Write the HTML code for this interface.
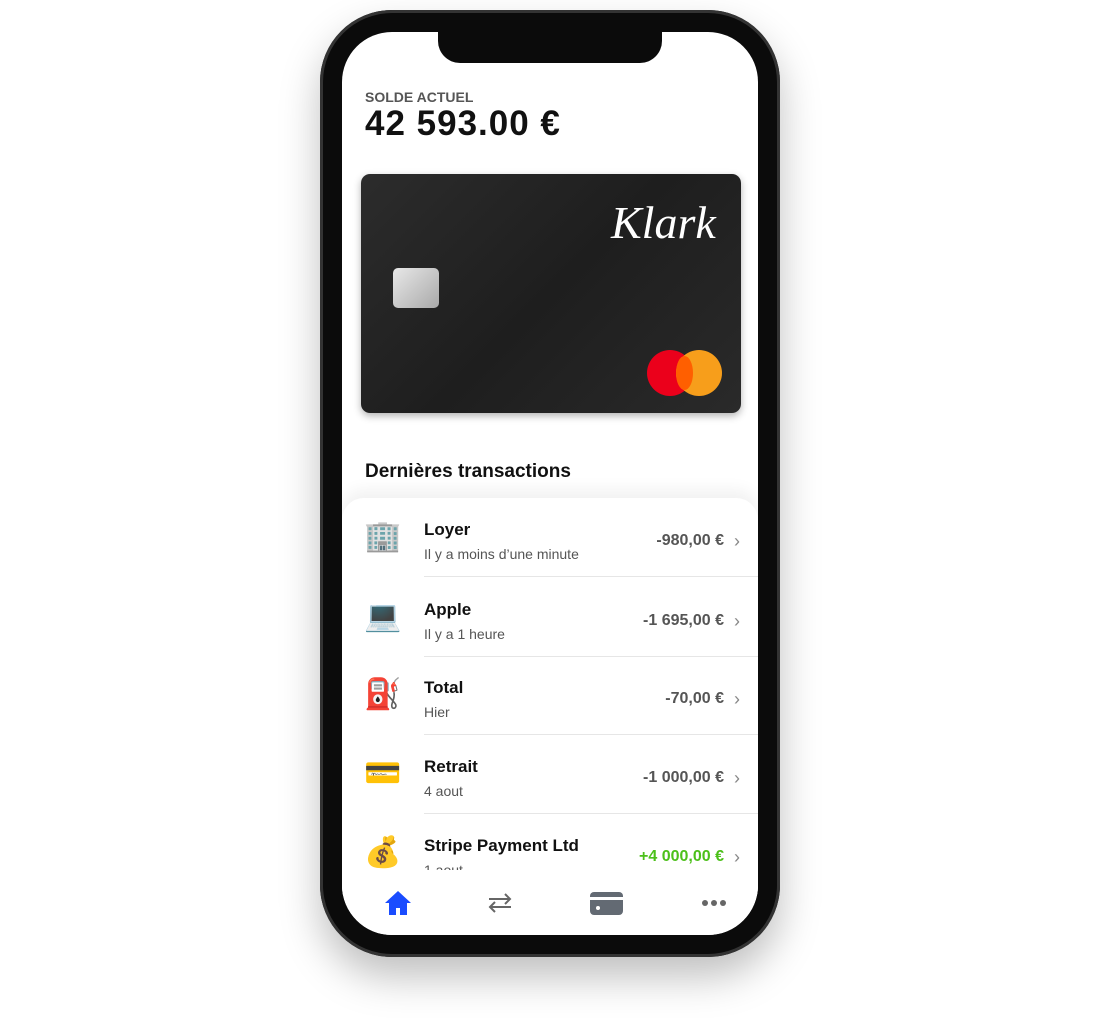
<!DOCTYPE html>
<html><head><meta charset="utf-8"><style>
*{margin:0;padding:0;box-sizing:border-box}
body{width:1100px;height:1018px;background:#fff;font-family:"Liberation Sans",sans-serif;position:relative;overflow:hidden}
.phone{position:absolute;left:320px;top:10px;width:460px;height:947px;border-radius:72px;background:#0b0b0b;box-shadow:0 20px 40px rgba(0,0,0,.25),inset 0 0 0 3px #333}
.screen{position:absolute;left:342px;top:32px;width:416px;height:903px;border-radius:50px;background:#fff;overflow:hidden}
.notch{position:absolute;left:96px;top:0;width:224px;height:31px;background:#0b0b0b;border-radius:0 0 22px 22px}
.abs{position:absolute}
.card{left:19px;top:142px;width:380px;height:239px;border-radius:9px;background:linear-gradient(135deg,#2c2c2c,#1e1e1e 50%,#2a2a2a);box-shadow:0 3px 8px rgba(0,0,0,.3)}
.chip{left:32px;top:94px;width:46px;height:40px;border-radius:5px;background:linear-gradient(135deg,#e8e8e8,#a9a9a9)}
.mc1{left:286px;top:176px;width:46px;height:46px;border-radius:50%;background:#eb001b}
.mc2{left:315px;top:176px;width:46px;height:46px;border-radius:50%;background:#f79e1b}
.mc3{left:315px;top:182px;width:17px;height:34px;border-radius:50%;background:#ff5f00}
.panel{left:0;top:466px;width:416px;height:420px;background:#fff;border-radius:22px 22px 0 0;box-shadow:0 -8px 16px rgba(0,0,0,.06)}
.row{position:absolute;left:0;width:416px;height:79px}
.row .ic{position:absolute;left:22px;top:22px;font-size:30px;line-height:34px;font-family:"DejaVu Sans",sans-serif}
.row .t{position:absolute;left:82px;top:22px;font-size:17px;font-weight:bold;color:#111}
.row .s{position:absolute;left:82px;top:48px;font-size:14px;color:#555}
.row .a{position:absolute;right:34px;top:34px;font-size:16px;font-weight:bold;color:#555}
.row .c{position:absolute;right:18px;top:33px;font-size:18px;color:#888}
.row .l{position:absolute;left:82px;right:0;bottom:0;height:1px;background:#e6e6e6}
.tab{left:0;top:838px;width:416px;height:65px;background:#fff}
</style></head><body>
<div class="phone"></div>
<div class="screen">
<div class="notch"></div>
<div class="abs" style="left:23px;top:57px;font-size:14px;font-weight:bold;color:#555">SOLDE ACTUEL</div>
<div class="abs" style="left:23px;top:72px;font-size:35px;font-weight:bold;color:#111;letter-spacing:1px">42 593.00 €</div>
<div class="abs card">
<div class="abs chip"></div>
<div class="abs" style="left:250px;top:22px;font-family:'Liberation Serif',serif;font-style:italic;font-size:46px;color:#fff">Klark</div>
<div class="abs mc1"></div><div class="abs mc2"></div><div class="abs mc3"></div>
</div>
<div class="abs" style="left:23px;top:429px;font-size:19px;font-weight:bold;color:#111">Dernières transactions</div>
<div class="abs panel">
<div class="row" style="top:0"><div class="ic">🏢</div><div class="t">Loyer</div><div class="s">Il y a moins d’une minute</div><div class="a">-980,00 €</div><div class="c">›</div><div class="l"></div></div>
<div class="row" style="top:80px"><div class="ic">💻</div><div class="t">Apple</div><div class="s">Il y a 1 heure</div><div class="a">-1 695,00 €</div><div class="c">›</div><div class="l"></div></div>
<div class="row" style="top:158px"><div class="ic">⛽</div><div class="t">Total</div><div class="s">Hier</div><div class="a">-70,00 €</div><div class="c">›</div><div class="l"></div></div>
<div class="row" style="top:237px"><div class="ic">💳</div><div class="t">Retrait</div><div class="s">4 aout</div><div class="a">-1 000,00 €</div><div class="c">›</div><div class="l"></div></div>
<div class="row" style="top:316px"><div class="ic">💰</div><div class="t">Stripe Payment Ltd</div><div class="s">1 aout</div><div class="a" style="color:#4cc01a">+4 000,00 €</div><div class="c">›</div></div>
</div>
<div class="abs tab">
<svg class="abs" style="left:42px;top:20px" width="28" height="26" viewBox="0 0 28 26"><path d="M14 1L1 13h4v12h7v-7h4v7h7V13h4z" fill="#1a4cff"/></svg>
<svg class="abs" style="left:145px;top:22px" width="26" height="22" viewBox="0 0 26 22" fill="none" stroke="#666" stroke-width="2"><path d="M2 7h21M18 2l5 5-5 5M24 15H3M8 10l-5 5 5 5"/></svg>
<div class="abs" style="left:248px;top:22px;width:33px;height:23px;border-radius:4px;background:#636a73"><div class="abs" style="left:0;top:5px;width:33px;height:3px;background:#fff"></div><div class="abs" style="left:6px;top:14px;width:4px;height:4px;border-radius:50%;background:#fff"></div></div>
<div class="abs" style="left:360px;top:30px;width:6px;height:6px;border-radius:50%;background:#666;box-shadow:9px 0 #666,18px 0 #666"></div>
</div>
</div>
</body></html>
